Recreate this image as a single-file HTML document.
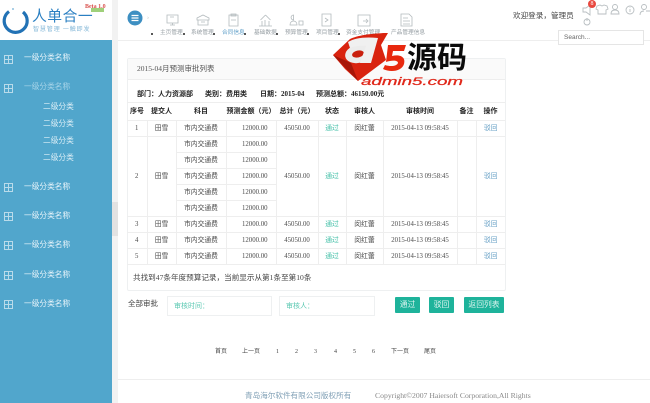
<!DOCTYPE html>
<html><head><meta charset="utf-8"><style>
html,body{margin:0;padding:0;width:650px;height:403px;overflow:hidden;background:#fff}
#w{position:absolute;left:0;top:0;width:650px;height:403px;overflow:hidden;background:#fff;filter:blur(.35px);font-family:"Liberation Serif","WenQuanYi Zen Hei","Noto Sans CJK SC",serif;color:#555;font-size:8px}
.a{position:absolute;white-space:nowrap;line-height:1}
#side{position:absolute;left:0;top:40px;width:112px;height:363px;background:#51a6cc}
#gut{position:absolute;left:112px;top:0;width:6px;height:403px;background:#f2f2f2}
#hline{position:absolute;left:118px;top:40px;width:532px;height:1px;background:#eee}
.s{position:absolute;left:24px;color:#e8f4fa;font-size:7.700px;line-height:1;white-space:nowrap}
.sub{position:absolute;left:43px;color:#dceef6;font-size:7.700px;line-height:1;white-space:nowrap}
.p{position:absolute;left:4px;width:7px;height:7px;border:1px solid #b9dbea}
.p:before{content:"";position:absolute;left:3px;top:0;width:1px;height:7px;background:#b9dbea}
.p:after{content:"";position:absolute;left:0;top:3px;width:7px;height:1px;background:#b9dbea}
.n{position:absolute;top:31px;font-size:5.700px;color:#969ea3;line-height:1;white-space:nowrap}
.d{position:absolute;width:2px;height:2px;border-radius:50%;background:#222;top:33px}
#card{position:absolute;left:127px;top:58px;width:377px;height:231px;border:1px solid #eef0f1;border-radius:2px}
#cardh{position:absolute;left:0;top:0;width:377px;height:20px;background:#fafafa;border-bottom:1px solid #eee}
table{position:absolute;left:127px;top:102px;width:378px;border-collapse:collapse;table-layout:fixed;font-size:6.800px;color:#4a4a4a}
td,th{border:1px solid #eee;padding:0;text-align:center;height:15px;line-height:15px;overflow:hidden;white-space:nowrap}
th{height:17px;font-size:7px;color:#222;font-weight:bold;border-left:0;border-right:0;border-top:1px solid #eee}
tr td:first-child{border-left:0}tr td:last-child{border-right:0}
.g{color:#41bfa7}.b{color:#6ba3c7}.r{text-align:right;padding-right:8px}
.inp{position:absolute;top:296px;height:18px;border:1px solid #eef0f1;color:#5bc8b2;font-size:7px;line-height:18px;text-indent:6px}
.btn{position:absolute;top:297px;height:16px;background:#1eb39b;color:#dff5f0;font-size:7.800px;line-height:16px;text-align:center;border-radius:1px}
.pg{position:absolute;top:349px;font-size:6px;color:#444;line-height:1;white-space:nowrap}
.i{position:absolute;top:91px;font-size:7px;font-weight:bold;color:#222;line-height:1;white-space:nowrap}
svg{position:absolute;overflow:visible}
</style></head><body><div id="w">
<div id="side"></div><div id="gut"></div><div id="hline"></div>

<svg style="left:2px;top:7px" width="26" height="27" viewBox="0 0 26 27" fill="none"><path d="M7 4.500A11.500 11.500 0 1 0 21 5" stroke="#2272b5" stroke-width="3.200"/><circle cx="11" cy="2" r="1" fill="#8fc0de"/></svg>
<div class="a" style="left:32px;top:9px;font-size:14.800px;color:#2a7fc2;letter-spacing:.5px;font-family:'Noto Sans CJK SC',sans-serif">人单合一</div>
<div class="a" style="left:33px;top:26px;font-size:6px;color:#85b8d8;letter-spacing:.9px;font-family:'Noto Sans CJK SC',sans-serif">智慧管理 一触即发</div>
<div class="a" style="left:91px;top:8px;width:13px;height:4px;background:#9fd07a"></div>
<div class="a" style="left:85px;top:4px;font-size:6px;color:#d9534f;font-weight:bold">Beta 1.0</div>

<div class="p" style="top:55px"></div><div class="s" style="top:54px">一级分类名称</div>
<div class="p" style="top:84px"></div><div class="s" style="top:83px;color:#a7d4e8">一级分类名称</div>
<div class="sub" style="top:103px">二级分类</div><div class="sub" style="top:120px">二级分类</div><div class="sub" style="top:137px">二级分类</div><div class="sub" style="top:154px">二级分类</div>
<div class="p" style="top:183px"></div><div class="s" style="top:183px">一级分类名称</div>
<div class="p" style="top:212px"></div><div class="s" style="top:212px">一级分类名称</div>
<div class="p" style="top:241px"></div><div class="s" style="top:241px">一级分类名称</div>
<div class="p" style="top:271px"></div><div class="s" style="top:271px">一级分类名称</div>
<div class="p" style="top:300px"></div><div class="s" style="top:300px">一级分类名称</div>
<div class="a" style="left:112px;top:202px;width:6px;height:34px;background:#e2e2e2"></div>

<svg style="left:127px;top:10px" width="16" height="16"><circle cx="8" cy="8" r="7.500" fill="#3d8fc2"/><path d="M4.500 5.500h7M4.500 8h7M4.500 10.500h7" stroke="#fff" stroke-width="1.300"/></svg>
<div class="a" style="left:147px;top:15px;font-size:6px;color:#bbb">›</div>
<svg style="left:160px;top:12px" width="270" height="16" fill="none" stroke="#b3babd" stroke-width=".8">
<path d="M7 3h11v8H7zM10 13h5M12.500 11v2M10 5h4"/>
<path d="M37 6l6-3 6 3v2H37zM38 8v5h10V8M41 10h4"/>
<path d="M69 3h9v11h-9zM71 2h5v2h-5zM71 8h5"/>
<path d="M99 14h13M105.500 3l-5 5M105.500 3l5 5M102 14V9M105 14V8M109 14V9"/>
<path d="M130 13c0-3 2-4 3.500-4s3.500 1 3.500 4zM133.500 3a2.500 2.500 0 1 0 .1 5zM139 9h4v4h-4z"/>
<path d="M162 2h9v12h-9zM165 6l3 2-3 2"/>
<path d="M198 3h12v11h-12zM203 9h4M206 7l2 2-2 2"/>
<path d="M241 2h8l3 3v9h-11zM243 6h5M243 9h7M243 12h7"/></svg>
<div class="d" style="left:151px"></div>
<div class="n" style="left:160px">主页管理</div><div class="d" style="left:183px"></div>
<div class="n" style="left:191px">系统管理</div><div class="d" style="left:213px"></div>
<div class="n" style="left:222px;color:#5f9fc8">合同信息</div><div class="d" style="left:244px"></div>
<div class="n" style="left:254px">基础数据</div><div class="d" style="left:276px"></div>
<div class="n" style="left:285px">预算管理</div><div class="d" style="left:307px"></div>
<div class="n" style="left:316px">项目管理</div><div class="d" style="left:338px"></div>
<div class="n" style="left:346px">资金支付管理</div>
<div class="n" style="left:391px">产品管理信息</div>

<div class="a" style="left:513px;top:12px;font-size:7.600px;color:#444">欢迎登录，管理员</div>
<svg style="left:580px;top:0" width="70" height="28" fill="none" stroke="#b8bec1" stroke-width=".9">
<path d="M3 8h3l4-3v10l-4-3H3z"/><path d="M17 6l3-1 2 1 2-1 3 1 1 3-2 1v4h-8v-4l-2-1z"/>
<circle cx="35" cy="7" r="2.500"/><path d="M31 14c0-2.500 1.500-4 4-4s4 1.500 4 4z"/>
<circle cx="50" cy="10" r="4"/><path d="M50 9v3M50 7.500v.5"/>
<circle cx="64" cy="7" r="2.500"/><path d="M60 15c0-3 2-4 4-4M66 11h4"/>
<circle cx="7" cy="22" r="3"/><path d="M7 18v3"/></svg>
<div class="a" style="left:588px;top:0;width:8px;height:8px;border-radius:50%;background:#e8483f;color:#fff;font-size:6px;line-height:8px;text-align:center">8</div>
<div class="a" style="left:558px;top:30px;width:84px;height:13px;border:1px solid #e5e5e5;font-size:6.500px;color:#666;line-height:13px;text-indent:5px;background:#fff;font-family:'Liberation Sans',sans-serif">Search...</div>

<div id="card"><div id="cardh"></div></div>
<div class="a" style="left:137px;top:65px;font-size:7.500px;color:#555">2015-04月预测审批列表</div>
<div class="i" style="left:137px">部门：人力资源部</div>
<div class="i" style="left:205px">类别：费用类</div>
<div class="i" style="left:260px">日期：2015-04</div>
<div class="i" style="left:316px">预测总额：46150.00元</div>

<table><colgroup><col style="width:20px"><col style="width:29px"><col style="width:50px"><col style="width:50px"><col style="width:42px"><col style="width:28px"><col style="width:37px"><col style="width:74px"><col style="width:19px"><col style="width:29px"></colgroup>
<tr><th>序号</th><th>提交人</th><th>科目</th><th>预测金额（元）</th><th>总计（元）</th><th>状态</th><th>审核人</th><th>审核时间</th><th>备注</th><th>操作</th></tr>
<tr><td>1</td><td>田雪</td><td>市内交通费</td><td class="r">12000.00</td><td>45050.00</td><td class="g">通过</td><td>闵红蕾</td><td>2015-04-13 09:58:45</td><td></td><td class="b">驳回</td></tr>
<tr><td rowspan="5">2</td><td rowspan="5">田雪</td><td>市内交通费</td><td class="r">12000.00</td><td rowspan="5">45050.00</td><td rowspan="5" class="g">通过</td><td rowspan="5">闵红蕾</td><td rowspan="5">2015-04-13 09:58:45</td><td rowspan="5"></td><td rowspan="5" class="b">驳回</td></tr>
<tr><td>市内交通费</td><td class="r">12000.00</td></tr>
<tr><td>市内交通费</td><td class="r">12000.00</td></tr>
<tr><td>市内交通费</td><td class="r">12000.00</td></tr>
<tr><td>市内交通费</td><td class="r">12000.00</td></tr>
<tr><td>3</td><td>田雪</td><td>市内交通费</td><td class="r">12000.00</td><td>45050.00</td><td class="g">通过</td><td>闵红蕾</td><td>2015-04-13 09:58:45</td><td></td><td class="b">驳回</td></tr>
<tr><td>4</td><td>田雪</td><td>市内交通费</td><td class="r">12000.00</td><td>45050.00</td><td class="g">通过</td><td>闵红蕾</td><td>2015-04-13 09:58:45</td><td></td><td class="b">驳回</td></tr>
<tr><td>5</td><td>田雪</td><td>市内交通费</td><td class="r">12000.00</td><td>45050.00</td><td class="g">通过</td><td>闵红蕾</td><td>2015-04-13 09:58:45</td><td></td><td class="b">驳回</td></tr>
</table>
<div class="a" style="left:133px;top:274px;font-size:7.600px;color:#444">共找到47条年度预算记录，当前显示从第1条至第10条</div>

<div class="a" style="left:128px;top:300px;font-size:7.500px;color:#444">全部审批</div>
<div class="inp" style="left:167px;width:103px">审核时间：</div>
<div class="inp" style="left:279px;width:94px">审核人：</div>
<div class="btn" style="left:395px;width:25px">通过</div>
<div class="btn" style="left:429px;width:25px">驳回</div>
<div class="btn" style="left:464px;width:40px">返回列表</div>

<div class="pg" style="left:215px">首页</div><div class="pg" style="left:242px">上一页</div>
<div class="pg" style="left:276px">1</div><div class="pg" style="left:295px">2</div><div class="pg" style="left:314px">3</div><div class="pg" style="left:334px">4</div><div class="pg" style="left:353px">5</div><div class="pg" style="left:372px">6</div>
<div class="pg" style="left:391px">下一页</div><div class="pg" style="left:424px">尾页</div>

<div class="a" style="left:118px;top:379px;width:532px;height:1px;background:#eee"></div>
<div class="a" style="left:245px;top:392px;font-size:7.600px;color:#7f9fb5">青岛海尔软件有限公司版权所有</div>
<div class="a" style="left:375px;top:392px;font-size:7.700px;color:#888">Copyright©2007 Haiersoft Corporation,All Rights</div>

<svg style="left:0;top:0" width="650" height="403" viewBox="0 0 650 403">
<path d="M333 55L350 39C358 35 374 33 388 33L381 45 386 60 358 81 345 69z" fill="#d9230f"/>
<path d="M333 55L358 81 351 63z" fill="#a81608"/>
<ellipse cx="358" cy="54" rx="13" ry="9" transform="rotate(-12 358 54)" fill="#ececec"/>
<ellipse cx="358" cy="54" rx="6" ry="3.500" transform="rotate(-12 358 54)" fill="#c9200e"/>
<path d="M348 42Q358 36 378 38L371 63 360 63 366 46Q357 45 350 48z" fill="#f0f0f0"/>
<path d="M388 45h18l-2 6h-11l-1 5c8-2 14 1 12 8-2 7-13 9-21 5l2-4c6 2 12 1 13-2 0-3-6-3-12-1z" fill="#e8280e"/>
<text x="407" y="68" font-family="'Noto Sans CJK SC',sans-serif" font-size="30" font-weight="bold" fill="#0a0a0a" textLength="60" lengthAdjust="spacingAndGlyphs">源码</text>
<text x="361" y="85" font-family="'Liberation Sans',sans-serif" font-size="11" font-style="italic" fill="#e0281a" stroke="#e0281a" stroke-width=".25" textLength="102" lengthAdjust="spacingAndGlyphs">admin5.com</text>
</svg>
</div></body></html>
